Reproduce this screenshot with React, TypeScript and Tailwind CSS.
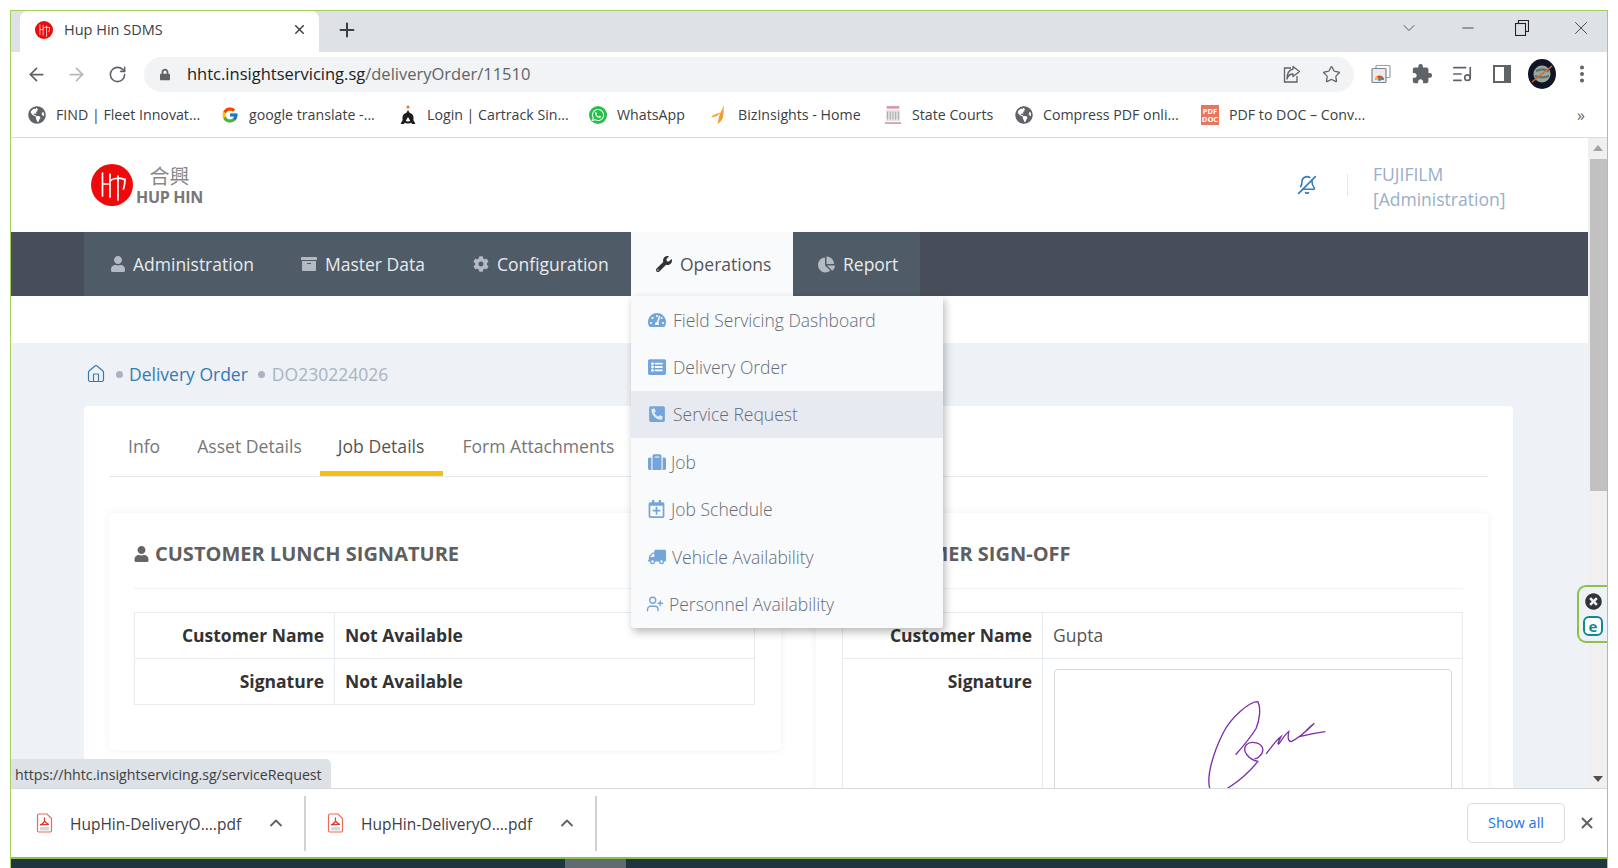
import { ArrowLeft, ArrowRight, BellOff, ChevronDown, ChevronUp, EllipsisVertical, Home, ListMusic, Minus, Plus, RotateCw, Star, UserPlus, X } from "lucide-react";
import {
  FaArchive,
  FaChartPie,
  FaCog,
  FaGlobeAmericas,
  FaListAlt,
  FaLock,
  FaPhoneSquareAlt,
  FaRegCalendarPlus,
  FaSuitcase,
  FaTachometerAlt,
  FaTimesCircle,
  FaTruck,
  FaUser,
  FaWhatsapp,
  FaWrench,
} from "react-icons/fa";
import { FcGoogle } from "react-icons/fc";
import { MdExtension } from "react-icons/md";

function LogoMark({ size }: { size: number }) {
  return (
    <svg width={size} height={size} viewBox="0 0 42 42" fill="none">
      <circle cx="21" cy="21" r="21" fill="#ee0a0a" />
      <g stroke="#fff" strokeWidth="1.7" strokeLinecap="round">
        <path d="M11.500 9v23M19 10v23M11.500 20h7.500" />
        <path d="M19 17c3-3 11-4 15-1M27 12v24M34 15c0 4-.5 7-1.500 10" />
      </g>
    </svg>
  );
}

function PdfIcon() {
  return (
    <svg width="17" height="20" viewBox="0 0 17 20" fill="none">
      <path d="M1.500 2.500a1.500 1.500 0 0 1 1.500-1.500h8l4.500 4.500v12a1.500 1.500 0 0 1-1.500 1.500H3a1.500 1.500 0 0 1-1.500-1.500z" fill="#fff" stroke="#ea6a5e" strokeWidth="1.200" />
      <path d="M4 12c3-1 5-4 4.500-7.500C8 7 9 10 13 11.500c-3-.5-6 0-9 .5z" stroke="#e8342a" strokeWidth="1.200" />
      <rect x="4" y="14" width="9" height="3.500" fill="#d9d9d9" />
    </svg>
  );
}

function ShareIcon() {
  return (
    <svg width="20" height="20" viewBox="0 0 20 20" fill="none" stroke="#5f6368" strokeWidth="1.300">
      <path d="M9 4H2.500v14H15v-6" />
      <path d="M11 2.500l6.500 5-6.500 5V10C8 10 6 11.500 5 15c0-5 2-9 6-10z" strokeLinejoin="round" />
    </svg>
  );
}

function CastIcon() {
  return (
    <svg width="20" height="20" viewBox="0 0 20 20" fill="none">
      <rect x="5" y="1.500" width="14" height="12" rx="1" stroke="#9aa0a6" strokeWidth="1.200" />
      <rect x="1" y="4.500" width="14" height="14" rx="1" fill="#e8eaed" stroke="#80868b" strokeWidth="1.200" />
      <path d="M4 16a4.500 4.500 0 0 1 9 0z" fill="#ea4335" />
      <path d="M4 16a4.500 4.500 0 0 1 2-3.700L8.500 16z" fill="#fbbc04" />
      <path d="M8.500 16h4.500a4.500 4.500 0 0 0-1-3z" fill="#34a853" />
      <circle cx="8.500" cy="15.500" r="1.500" fill="#4285f4" />
    </svg>
  );
}

function Avatar() {
  return (
    <svg width="28" height="30" viewBox="0 0 28 30">
      <ellipse cx="14" cy="15" rx="14" ry="15" fill="#101426" />
      <circle cx="14" cy="15" r="8.500" fill="#9aa79b" />
      <path d="M8 12c4-2 9-2 13 0M7 17c5 2 9 2 14 0" stroke="#5d6f77" strokeWidth="2" fill="none" />
      <path d="M4 23L24 7" stroke="#d9682a" strokeWidth="1.600" />
    </svg>
  );
}

function CartrackIcon() {
  return (
    <svg width="18" height="22" viewBox="0 0 18 22" fill="none">
      <circle cx="9" cy="3" r="1.600" fill="#e8772e" />
      <path d="M9 6L1.500 20h3.500L9 13l4 7h3.500z" fill="#1c1c1c" />
      <circle cx="9" cy="14" r="4.500" stroke="#1c1c1c" strokeWidth="2.200" />
    </svg>
  );
}

function BizIcon() {
  return (
    <svg width="18" height="22" viewBox="0 0 18 22" fill="none">
      <path d="M14 1c-1 5 0 8-1 12-.6 3-2.600 5-5.500 7 1-3 1-6 2-9z" fill="#f29a2e" />
      <path d="M1 13c3-3 6-3.500 10-4.500l-4 3.500c-2 1-4 1.500-6 1z" fill="#f6a640" />
    </svg>
  );
}

function CourtsIcon() {
  return (
    <svg width="20" height="22" viewBox="0 0 20 22" fill="none">
      <path d="M3 1h14v3H3z" fill="#d99aa8" />
      <path d="M2 5h16v13H2z" fill="#e6e6e6" />
      <path d="M4 7v9M7 7v9M10 7v9M13 7v9M16 7v9" stroke="#a9a9a9" strokeWidth="1.200" />
      <path d="M1 19h18v2H1z" fill="#d3a2ae" />
    </svg>
  );
}

function Bookmark({ icon, label, width }: { icon: React.ReactNode; label: string; width: string }) {
  return (
    <div className={`flex items-center ${width}`}>
      <span className="flex w-[18px] h-[22px] items-center justify-center shrink-0">{icon}</span>
      <span className="ml-[10px] text-[14.200px] text-[#3c4043] whitespace-nowrap">{label}</span>
    </div>
  );
}

function ChromeBar() {
  return (
    <>
      {/* tabs */}
      <div className="flex h-[41px] bg-[#dee1e6]">
        <div className="ml-[9px] flex w-[299px] items-center rounded-t-[8px] bg-white pb-[4px] pl-[15px]">
          <LogoMark size={18} />
          <span className="ml-[11px] text-[14.500px] text-[#3c4043]">Hup Hin SDMS</span>
          <X className="ml-auto mr-[12px] w-[15px] h-[15px] text-[#3c4043]" strokeWidth={2.4} />
        </div>
        <Plus className="ml-[17px] mt-[8px] w-[22px] h-[22px] text-[#3c4043]" strokeWidth={2.2} />
        <div className="ml-auto flex items-center pb-[8px] text-[#3c4043]">
          <ChevronDown className="w-[20px] h-[20px] mr-[40px]" strokeWidth={1} />
          <Minus className="w-[18px] h-[18px] mr-[38px]" strokeWidth={1.2} />
          <svg width="14" height="16" viewBox="0 0 14 16" fill="none" stroke="#222" strokeWidth="1.100" className="mr-[41px]">
            <rect x="0.500" y="3.500" width="10" height="12" />
            <path d="M3.500 3.500v-3h10v11h-3" />
          </svg>
          <X className="w-[22px] h-[22px] mr-[15px]" strokeWidth={1} />
        </div>
      </div>
      {/* address bar */}
      <div className="flex h-[44px] items-center bg-white">
        <ArrowLeft className="ml-[15px] w-[21px] h-[21px] text-[#5f6368]" strokeWidth={2} />
        <ArrowRight className="ml-[19px] w-[21px] h-[21px] text-[#b5b8bc]" strokeWidth={2} />
        <RotateCw className="ml-[21px] w-[19px] h-[19px] text-[#5f6368]" strokeWidth={2} />
        <div className="ml-[17px] flex h-[35px] w-[1210px] items-center rounded-full bg-[#f1f3f4] pl-[16px]">
          <FaLock className="w-[10px] h-[13px] text-[#5f6368]" />
          <span className="ml-[17px] text-[16.500px] text-[#202124]">
            hhtc.insightservicing.sg<span className="text-[#5f6368]">/deliveryOrder/11510</span>
          </span>
          <div className="ml-auto flex items-center gap-[20px] pr-[13px]">
            <ShareIcon />
            <Star className="w-[19px] h-[19px] text-[#5f6368]" strokeWidth={1.6} />
          </div>
        </div>
        <div className="ml-[17px] flex items-center">
          <CastIcon />
          <MdExtension className="ml-[20px] w-[22px] h-[22px] text-[#5f6368]" />
          <ListMusic className="ml-[18px] w-[22px] h-[22px] text-[#5f6368]" strokeWidth={1.8} />
          <div className="ml-[20px] h-[18px] w-[18px] border-[2.500px] border-r-[7px] border-[#5f6368]" />
          <div className="ml-[17px]"><Avatar /></div>
          <EllipsisVertical className="ml-[15px] w-[22px] h-[22px] text-[#5f6368]" strokeWidth={2.4} />
        </div>
      </div>
      {/* bookmarks */}
      <div className="flex h-[42px] items-center border-b border-[#dadce0] bg-white pb-[4px] pl-[17px]">
        <Bookmark width="w-[193px]" icon={<FaGlobeAmericas className="w-[18px] h-[18px] text-[#5f6368]" />} label="FIND | Fleet Innovat..." />
        <Bookmark width="w-[178px]" icon={<FcGoogle className="w-[18px] h-[18px]" />} label="google translate -..." />
        <Bookmark width="w-[190px]" icon={<CartrackIcon />} label="Login | Cartrack Sin..." />
        <Bookmark width="w-[121px]" icon={<span className="flex h-[18px] w-[18px] items-center justify-center rounded-full bg-[#25c04a]"><FaWhatsapp className="w-[14px] h-[14px] text-white" /></span>} label="WhatsApp" />
        <Bookmark width="w-[174px]" icon={<BizIcon />} label="BizInsights - Home" />
        <Bookmark width="w-[131px]" icon={<CourtsIcon />} label="State Courts" />
        <Bookmark width="w-[186px]" icon={<FaGlobeAmericas className="w-[18px] h-[18px] text-[#5f6368]" />} label="Compress PDF onli..." />
        <Bookmark
          width="w-[200px]"
          icon={
            <span className="flex h-[20px] w-[19px] flex-col items-center justify-center bg-[#e9755f] text-[7.500px] font-bold leading-[8px] text-white">
              <span>PDF</span>
              <span>DOC</span>
            </span>
          }
          label="PDF to DOC – Conv..."
        />
        <span className="ml-auto mr-[22px] text-[16px] text-[#5f6368]">»</span>
      </div>
    </>
  );
}

const navItems = [
  { label: "Administration", icon: FaUser, cls: "w-[191px] pl-[26px]", gap: "ml-[7px]" },
  { label: "Master Data", icon: FaArchive, cls: "w-[171px] pl-[26px]", gap: "ml-[8px]" },
  { label: "Configuration", icon: FaCog, cls: "w-[185px] pl-[27px]", gap: "ml-[8px]" },
];

const opsMenu = [
  { label: "Field Servicing Dashboard", icon: <FaTachometerAlt className="w-[18px] h-[18px]" />, gap: "ml-[7px]" },
  { label: "Delivery Order", icon: <FaListAlt className="w-[18px] h-[18px]" />, gap: "ml-[7px]" },
  { label: "Service Request", icon: <FaPhoneSquareAlt className="w-[18px] h-[18px]" />, gap: "ml-[7px]", active: true },
  { label: "Job", icon: <FaSuitcase className="w-[18px] h-[18px]" />, gap: "ml-[5px]" },
  { label: "Job Schedule", icon: <FaRegCalendarPlus className="w-[17px] h-[18px]" />, gap: "ml-[6px]" },
  { label: "Vehicle Availability", icon: <FaTruck className="w-[18px] h-[18px] -scale-x-100" />, gap: "ml-[6px]" },
  { label: "Personnel Availability", icon: <UserPlus className="w-[18px] h-[18px] -ml-[2px]" strokeWidth={1.8} />, gap: "ml-[5px]" },
];

function Nav() {
  return (
    <div className="flex h-[64px] bg-[#484e59] pl-[73px] text-[17.500px]">
      {navItems.map((item) => {
        const Icon = item.icon;
        return (
          <div key={item.label} className={`flex items-center bg-[#4f5b66] text-[#e8ebee] ${item.cls}`}>
            <Icon className="w-[16px] h-[16px] text-[#b3bac4]" />
            <span className={item.gap}>{item.label}</span>
          </div>
        );
      })}
      {/* open menu */}
      <div className="relative flex w-[162px] items-center bg-[#f9fafc] pl-[25px] text-[#555]">
        <FaWrench className="w-[16px] h-[16px] text-[#333]" />
        <span className="ml-[8px]">Operations</span>
        <div className="absolute left-0 top-full z-20 w-[312px] rounded-b-[3px] bg-[#f9fafc] shadow-[2px_4px_8px_rgba(0,0,0,0.28)]">
          {opsMenu.map((m) => (
            <div key={m.label} className={`flex h-[47.400px] items-center pl-[17px] font-light text-[#666c76] ${m.active ? "bg-[#e8eaf1]" : ""}`}>
              <span className="text-[#74a5da]">{m.icon}</span>
              <span className={m.gap}>{m.label}</span>
            </div>
          ))}
        </div>
      </div>
      <div className="flex w-[127px] items-center bg-[#4f5b66] pl-[25px] text-[#e8ebee]">
        <FaChartPie className="w-[17px] h-[17px] text-[#b3bac4]" />
        <span className="ml-[8px]">Report</span>
      </div>
    </div>
  );
}

function SignatureCard({ title, rows, right }: { title: string; rows: { label: string; value: string }[]; right?: boolean }) {
  return (
    <div className={`rounded-[4px] bg-white pb-[45px] shadow-[0_0_8px_rgba(0,0,0,0.06)] ${right ? "pl-[26px] pr-[25px]" : "pl-[25px] pr-[26px]"}`}>
      <div className="flex h-[76px] items-center border-b border-[#eef1f5] pt-[7px] text-[#5f5f5f]">
        <FaUser className="w-[15px] h-[16px] text-[#666]" />
        <span className="ml-[6px] text-[20px] font-bold uppercase">{title}</span>
      </div>
      <table className="mt-[23px] w-full border-collapse text-[17.500px]">
        <tbody>
          {rows.map((r) => (
            <tr key={r.label} className="h-[46px]">
              <td className="w-[200px] border border-[#e7ecf1] pr-[10px] text-right font-bold text-[#333]">{r.label}</td>
              <td className={`border border-[#e7ecf1] pl-[10px] ${right ? "font-normal text-[#555]" : "font-bold text-[#333]"}`}>{r.value}</td>
            </tr>
          ))}
          {right && (
            <tr>
              <td className="h-[200px] w-[200px] border border-[#e7ecf1] pr-[10px] pt-[9px] align-top text-right font-bold text-[#333]">Signature</td>
              <td className="border border-[#e7ecf1] pl-[11px] pr-[10px] pt-[10px] align-top">
                <div className="h-[180px] rounded-[4px] border border-[#d8d8d8] pl-[151px] pt-[30px]">
                  <svg width="122" height="93" viewBox="320 360 365 280" fill="none" stroke="#7b2fa8" strokeWidth="4">
                    <path d="M330 625C320 590 340 520 370 460C395 410 450 365 475 365C485 385 480 420 470 445C455 470 430 500 408 525" />
                    <path d="M330 625C340 640 360 640 385 625C425 600 455 570 475 545C450 540 425 515 440 495C455 480 490 490 490 510C490 525 470 540 465 535" />
                    <path d="M500 522C510 510 530 480 545 470C540 480 530 500 540 490C550 475 560 460 568 455C565 470 565 485 575 485C600 475 625 450 645 430C625 445 610 465 600 470C630 462 655 458 678 455" />
                  </svg>
                </div>
              </td>
            </tr>
          )}
        </tbody>
      </table>
    </div>
  );
}

function Page() {
  return (
    <div className="h-full flex-1 overflow-hidden bg-[#eef1f5] font-['Open_Sans',sans-serif]">
      {/* header */}
      <div className="flex h-[94px] items-center bg-white">
        <div className="ml-[80px] flex items-center">
          <LogoMark size={42} />
          <div className="ml-[3px] flex flex-col items-center text-[#777]">
            <span className="mt-[-1px] font-['Noto_Sans_CJK_TC',sans-serif] text-[20px] leading-[24px] text-[#888]">合興</span>
            <span className="text-[16px] font-bold leading-[18px] tracking-[-0.3px]">HUP HIN</span>
          </div>
        </div>
        <BellOff className="ml-[1094px] w-[20px] h-[20px] -scale-x-100 text-[#337ab7]" strokeWidth={1.9} />
        <div className="ml-[30px] h-[22px] w-px bg-[#e3e6ea]" />
        <div className="ml-[25px] pt-[4px] text-[17.500px] leading-[25px] text-[#98aec9]">
          <div>FUJIFILM</div>
          <div>[Administration]</div>
        </div>
      </div>
      <Nav />
      <div className="h-[47px] bg-white" />
      {/* breadcrumb */}
      <div className="flex h-[63px] items-center pl-[75px] pb-[1px] text-[17.500px]">
        <Home className="w-[20px] h-[20px] text-[#337ab7]" strokeWidth={1.4} />
        <span className="ml-[10px] h-[7px] w-[7px] rounded-full bg-[#a9b4c1]" />
        <span className="ml-[6px] text-[#337ab7]">Delivery Order</span>
        <span className="ml-[10px] h-[7px] w-[7px] rounded-full bg-[#a9b4c1]" />
        <span className="ml-[7px] text-[#a9b4c1]">DO230224026</span>
      </div>
      {/* card */}
      <div className="ml-[73px] w-[1429px] rounded-[4px] bg-white px-[25px]">
        <div className="flex h-[71px] items-end gap-[1px] border-b border-[#e3e8ee] pl-[1px] text-[17.600px] text-[#777]">
          <div className="flex h-[70px] items-center border-b-[5px] border-transparent px-[18px] pt-[15px]">Info</div>
          <div className="flex h-[70px] items-center border-b-[5px] border-transparent px-[18px] pt-[15px]">Asset Details</div>
          <div className="-ml-[1px] flex h-[70px] items-center border-b-[5px] border-[#f4c20d] pl-[18px] pr-[19px] pt-[15px] text-[#555]">Job Details</div>
          <div className="flex h-[70px] items-center border-b-[5px] border-transparent px-[18px] pt-[15px]">Form Attachments</div>
        </div>
        <div className="mt-[36px] grid grid-cols-2 items-start gap-[35px]">
          <SignatureCard
            title="Customer Lunch Signature"
            rows={[
              { label: "Customer Name", value: "Not Available" },
              { label: "Signature", value: "Not Available" },
            ]}
          />
          <SignatureCard title="Customer Sign-off" rows={[{ label: "Customer Name", value: "Gupta" }]} right />
        </div>
      </div>
    </div>
  );
}

function DownloadItem({ name, cls }: { name: string; cls: string }) {
  return (
    <div className={`flex h-[55px] items-center border-r-2 border-[#d0d2d5] ${cls}`}>
      <PdfIcon />
      <span className="ml-[17px] pt-[3px] text-[15.500px] text-[#3c4043]">{name}</span>
      <ChevronUp className="ml-auto mr-[18px] w-[20px] h-[20px] text-[#5f6368]" strokeWidth={2.2} />
    </div>
  );
}

export default function App() {
  return (
    <div className="flex h-[868px] w-[1618px] flex-col overflow-hidden bg-white pl-[10px] pr-[10px] pt-[10px] font-['Open_Sans',sans-serif]">
      <div className="relative flex flex-1 flex-col border-x border-t border-[#a5d15a]">
        <ChromeBar />
        {/* viewport */}
        <div className="relative flex h-[650px]">
          <Page />
          <div className="flex h-full w-[19px] flex-col items-center bg-[#f0f0f0]">
            <span className="mt-[7px] h-0 w-0 border-x-[5px] border-b-[6px] border-x-transparent border-b-[#a3a3a3]" />
            <div className="ml-[2px] mt-[8px] h-[332px] w-[17px] bg-[#c1c1c1]" />
            <span className="mb-[6px] mt-auto h-0 w-0 border-x-[5px] border-t-[6px] border-x-transparent border-t-[#505050]" />
          </div>
          {/* status bubble */}
          <div className="absolute bottom-0 left-0 z-10 flex h-[29px] w-[320px] items-center rounded-tr-[5px] bg-[#dee1e6] pl-[4px] pt-[2px] text-[14.200px] text-[#3c4043]">
            https://hhtc.insightservicing.sg/serviceRequest
          </div>
          {/* eset bubble */}
          <div className="absolute right-0 top-[447px] z-10 flex h-[58px] w-[30px] flex-col items-center gap-[6px] rounded-l-[9px] border-2 border-r-0 border-[#8bc34a] bg-[#eef1f5] pt-[6px]">
            <FaTimesCircle className="w-[17px] h-[17px] text-[#2f3438]" />
            <span className="flex h-[20px] w-[20px] items-center justify-center rounded-[6px] border-2 border-[#0f8a94] bg-white text-[15px] font-bold leading-none text-[#0f8a94]">e</span>
          </div>
        </div>
        {/* downloads */}
        <div className="flex h-[69px] items-center border-t border-[#d6d8da] bg-white">
          <DownloadItem name="HupHin-DeliveryO....pdf" cls="w-[295px] pl-[25px]" />
          <DownloadItem name="HupHin-DeliveryO....pdf" cls="w-[291px] pl-[21px]" />
          <div className="ml-auto flex h-[40px] w-[98px] items-center justify-center rounded-[5px] border border-[#dadce0] text-[14.500px] text-[#1a73e8]">Show all</div>
          <X className="ml-[13px] mr-[11px] w-[18px] h-[18px] text-[#5f6368]" strokeWidth={2.6} />
        </div>
        <div className="h-[2px] bg-[#8bc34a]" />
        <div className="flex h-[9px] bg-[#1f3640]">
          <div className="ml-[554px] h-full w-[61px] bg-[#5f6b70]" />
        </div>
      </div>
    </div>
  );
}
